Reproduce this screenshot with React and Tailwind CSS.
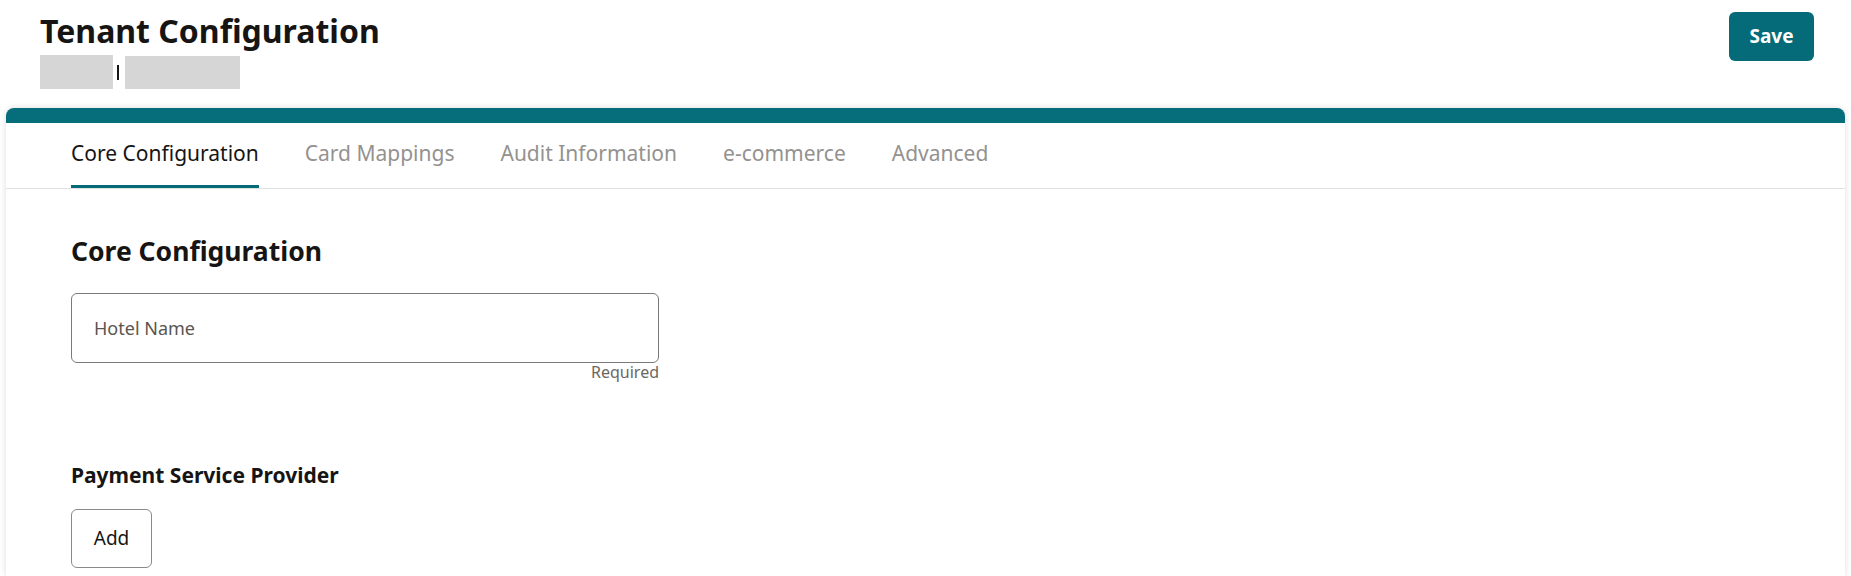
import React, { useState } from 'react';

const TABS = ['Core Configuration', 'Card Mappings', 'Audit Information', 'e-commerce', 'Advanced'];

export default function App() {
  const [active, setActive] = useState(0);
  const [hotelName, setHotelName] = useState('');

  return (
    <div className="min-h-screen bg-white text-[#161513] font-['Noto_Sans','Lato',sans-serif]">
      {/* Page header */}
      <header className="flex items-start justify-between pl-10 pr-[37px] pt-3">
        <div>
          <h1 className="text-[32px] leading-[38px] font-bold">Tenant Configuration</h1>
          <div className="mt-1 flex items-center">
            <span className="block w-[73px] h-[34px] bg-[#d6d6d6]" />
            <span className="ml-[4px] mt-[2px] block w-[2px] h-[15px] bg-[#161513]" />
            <span className="ml-[6px] mt-[2px] block w-[115px] h-[33px] bg-[#d6d6d6]" />
          </div>
        </div>
        <button className="w-[85px] h-[49px] rounded-md bg-[#056b78] text-white text-[19px] font-bold">
          Save
        </button>
      </header>

      {/* Card */}
      <div className="mx-[6px] mt-[19px] rounded-t-lg bg-white shadow-[0_0_6px_rgba(0,0,0,0.14)]">
        <div className="h-[15px] rounded-t-lg bg-[#066d7a]" />

        <nav className="flex gap-[46px] pl-[65px] border-b border-[#e2e2e2]">
          {TABS.map((tab, i) => (
            <button
              key={tab}
              onClick={() => setActive(i)}
              className={
                'pt-[18px] pb-[19px] border-b-[3px] text-[21px] leading-[25px] ' +
                (i === active ? 'border-[#056b78] text-[#161513]' : 'border-transparent text-[#949290]')
              }
            >
              {tab}
            </button>
          ))}
        </nav>

        <section className="pl-[65px] pt-[47px] pb-2">
          <h2 className="text-[26.5px] leading-[31px] font-bold">Core Configuration</h2>

          <div className="mt-[26px] w-[588px]">
            <label className="flex items-center h-[70px] rounded-md border border-[#7a7a7a] px-[22px]">
              <input
                value={hotelName}
                onChange={e => setHotelName(e.target.value)}
                placeholder="Hotel Name"
                className="w-full bg-transparent outline-none text-[18px] text-[#161513] placeholder:text-[#5a5550]"
              />
            </label>
            <p className="text-right text-[16px] leading-[19px] text-[#6b6762]">Required</p>
          </div>

          <h3 className="mt-[80px] text-[21px] leading-[26px] font-bold">Payment Service Provider</h3>
          <button className="mt-[21px] w-[81px] h-[59px] rounded-md border border-[#8a8a8a] bg-white text-[19px] text-[#161513]">
            Add
          </button>
        </section>
      </div>
    </div>
  );
}
